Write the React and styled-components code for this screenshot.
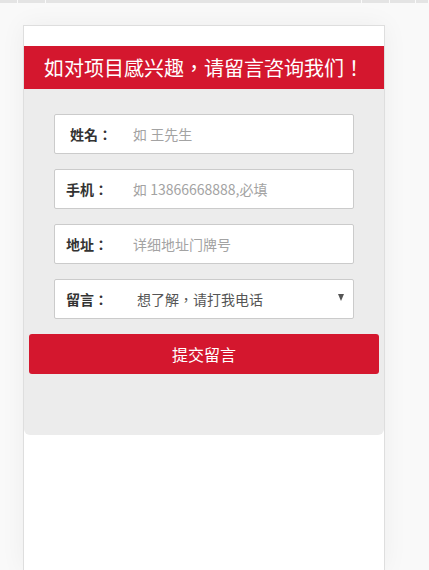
import React from 'react'
import styled, { createGlobalStyle } from 'styled-components'

const GlobalStyle = createGlobalStyle`
  html, body {
    margin: 0;
    padding: 0;
    background: #f9f9f9;
    overflow: hidden;
  }
  body {
    font-family: "Noto Sans CJK TC", "Noto Sans CJK SC", "Noto Sans", "Liberation Sans", sans-serif;
  }
`

const TopStrip = styled.div`
  display: flex;
  height: 3px;
  background: #e4e4e4;
`

const StripCell = styled.div`
  width: ${props => props.w}px;
  border-right: 1px solid #fafafa;
  flex: ${props => props.grow ? 1 : 'none'};
`

const Page = styled.div`
  padding: 22px 0 0 23px;
`

const Card = styled.div`
  box-sizing: border-box;
  width: 362px;
  height: 545px;
  background: #fff;
  border: 1px solid #dedede;
  border-bottom: none;
  padding-top: 20px;
  box-shadow: 0 0 24px rgba(0, 0, 0, 0.05);
`

const Header = styled.div`
  height: 43px;
  line-height: 43px;
  background: #d4172e;
  color: #fff;
  font-size: 20px;
  text-align: center;
`

const FormArea = styled.form`
  background: #ececec;
  border-radius: 0 0 6px 6px;
  padding: 25px 5px 61px;
  display: flex;
  flex-direction: column;
`

const Fields = styled.div`
  display: flex;
  flex-direction: column;
  gap: 15px;
  padding: 0 25px;
`

const Field = styled.label`
  box-sizing: border-box;
  position: relative;
  display: flex;
  align-items: center;
  height: 40px;
  background: #fff;
  border: 1px solid #cbcbcb;
  border-radius: 2px;
`

const Label = styled.span`
  box-sizing: border-box;
  flex: none;
  width: 78px;
  padding-left: ${props => props.indent || 11}px;
  font-size: 14px;
  font-weight: bold;
  color: #333;
  white-space: nowrap;
`

const Input = styled.input`
  flex: 1;
  min-width: 0;
  border: none;
  outline: none;
  background: transparent;
  font-family: inherit;
  font-size: 14px;
  color: #333;
  padding: 0;
  &::placeholder {
    color: #a3a3a3;
  }
`

const Select = styled.select`
  flex: 1;
  min-width: 0;
  appearance: none;
  border: none;
  outline: none;
  background: transparent;
  font-family: inherit;
  font-size: 14px;
  color: #555;
  padding: 0 30px 0 0;
  margin-left: 4px;
  height: 38px;
`

const Arrow = styled.span`
  position: absolute;
  right: 9px;
  top: 14px;
  width: 0;
  height: 0;
  border-left: 3.5px solid transparent;
  border-right: 3.5px solid transparent;
  border-top: 7px solid #555;
  pointer-events: none;
`

const SubmitButton = styled.button`
  margin-top: 15px;
  height: 40px;
  border: none;
  border-radius: 3px;
  background: #d4172e;
  color: #fff;
  font-family: inherit;
  font-size: 16px;
  cursor: pointer;
`

function App() {
  return (
    <>
      <GlobalStyle />
      <TopStrip>
        <StripCell w={17} />
        <StripCell w={27} />
        <StripCell grow />
        <StripCell w={27} />
        <StripCell w={25} />
        <StripCell w={12} />
      </TopStrip>
      <Page>
        <Card>
          <Header>如对项目感兴趣，请留言咨询我们！</Header>
          <FormArea onSubmit={e => e.preventDefault()}>
            <Fields>
              <Field>
                <Label indent={15}>姓名：</Label>
                <Input placeholder="如 王先生" />
              </Field>
              <Field>
                <Label>手机：</Label>
                <Input placeholder="如 13866668888,必填" />
              </Field>
              <Field>
                <Label>地址：</Label>
                <Input placeholder="详细地址门牌号" />
              </Field>
              <Field>
                <Label>留言：</Label>
                <Select defaultValue="call">
                  <option value="call">想了解，请打我电话</option>
                  <option value="info">请发资料给我</option>
                </Select>
                <Arrow />
              </Field>
            </Fields>
            <SubmitButton type="submit">提交留言</SubmitButton>
          </FormArea>
        </Card>
      </Page>
    </>
  )
}

export default App
